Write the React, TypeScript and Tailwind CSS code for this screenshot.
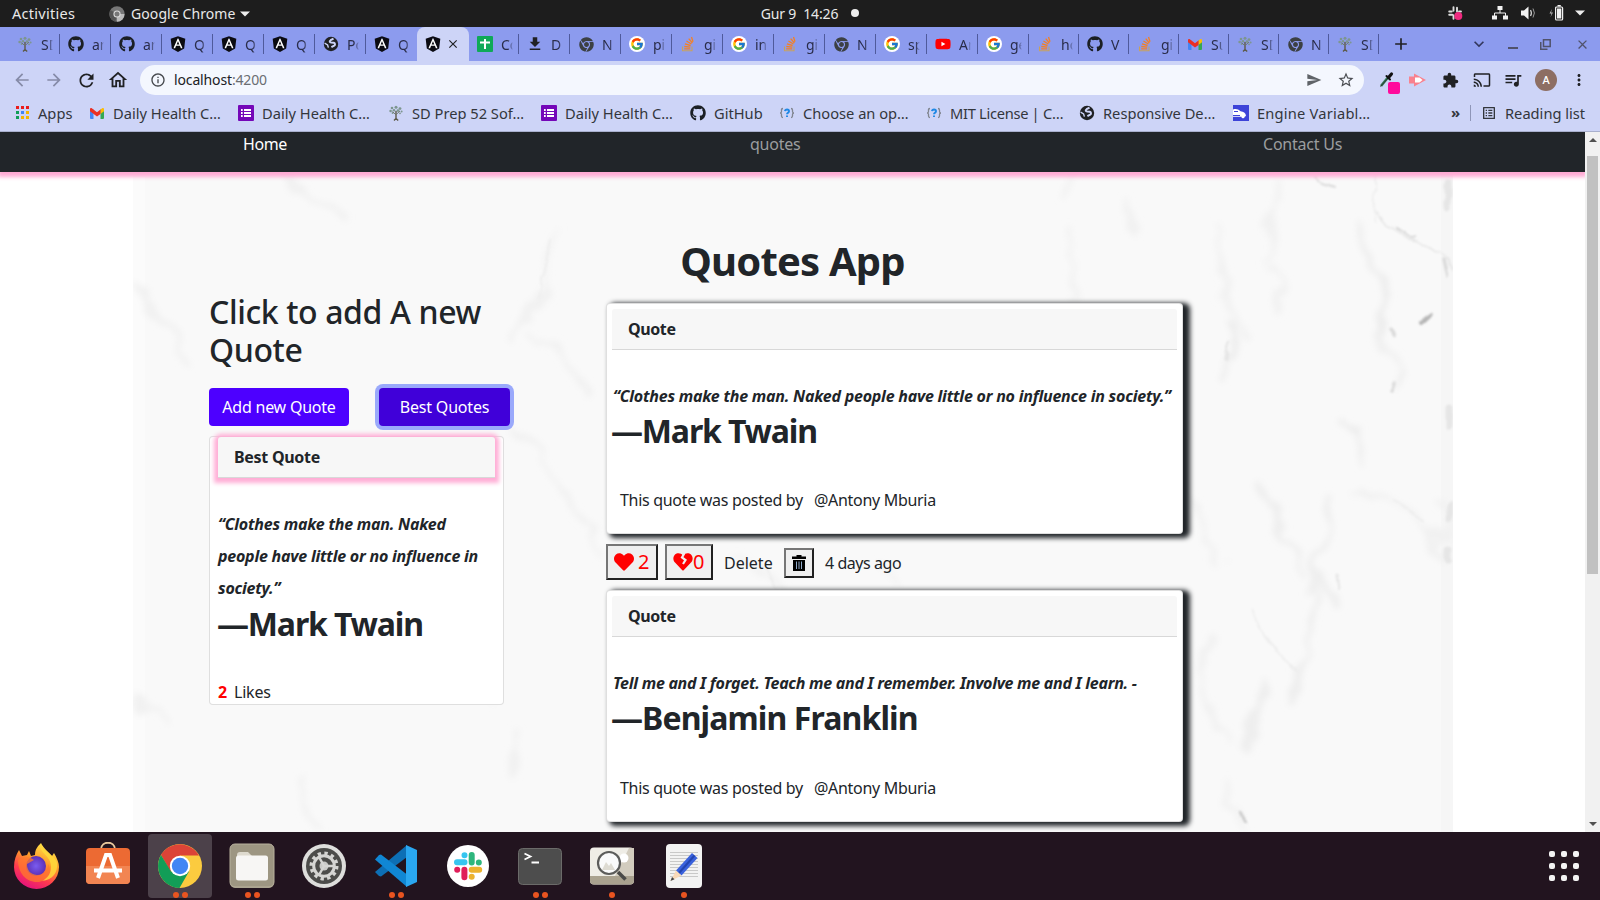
import type { ReactNode } from "react";
import { FaAngular, FaChrome, FaGithub, FaHeart, FaYoutube } from "react-icons/fa";
import { FcGoogle } from "react-icons/fc";
import {
  MdAdd, MdArrowBack, MdArrowForward, MdCast, MdClose, MdExtension, MdFileDownload, MdInfoOutline,
  MdKeyboardArrowDown, MdMoreVert, MdOutlineHome, MdOutlineListAlt, MdQueueMusic, MdRefresh, MdSend, MdStarBorder,
} from "react-icons/md";

/* ---------- small icons ---------- */

const Tree = () => (
  <svg width="16" height="16" viewBox="0 0 16 16">
    <g fill="#7d968f">
      <circle cx="4" cy="3" r="1.3" /><circle cx="8" cy="2.2" r="1.5" /><circle cx="12" cy="3.6" r="1.4" />
      <circle cx="2.6" cy="6" r="1.3" /><circle cx="6" cy="5.2" r="1.3" /><circle cx="10" cy="5.6" r="1.4" />
      <circle cx="13.6" cy="6.6" r="1" /><circle cx="4.6" cy="8" r="1" /><circle cx="12" cy="8.3" r=".9" />
    </g>
    <path d="M8 6v9M6 15.400l2-2 2.200 2" stroke="#5d5a49" strokeWidth="1.400" fill="none" />
    <path d="M8 10L4.500 6.500M8.200 9.500L12 6" stroke="#6d7568" strokeWidth=".9" fill="none" />
  </svg>
);
const Angular = () => (
  <span className="-m-px grid h-[18px] w-[18px] place-items-center">
    <span className="col-start-1 row-start-1 h-[10px] w-2 bg-white" />
    <FaAngular className="col-start-1 row-start-1 text-[18px] text-[#0b0b12]" />
  </span>
);
const Globe = () => (
  <svg width="16" height="16" viewBox="0 0 16 16">
    <circle cx="8" cy="8" r="7.2" fill="#202124" />
    <path d="M10.500 2.600L7.600 4.200c-1.400 1-1 2.200.6 2.400l2.600.2c1.400.4 1.600 2 .4 2.800L8.400 11.200" stroke="#cdd4f7" strokeWidth="2" fill="none" />
    <path d="M1.600 7.200l3 1.800.8 2.600" stroke="#cdd4f7" strokeWidth="1.400" fill="none" />
  </svg>
);
const Google = () => (
  <span className="grid h-4 w-4 place-items-center rounded-full bg-white"><FcGoogle className="text-[14px]" /></span>
);
const Sheets = () => (
  <svg width="16" height="16" viewBox="0 0 16 16">
    <rect width="16" height="16" rx="1" fill="#0fa958" />
    <path d="M8 3v10M3 6.500h10" stroke="#fff" strokeWidth="2" />
  </svg>
);
const Forms = () => (
  <svg width="16" height="16" viewBox="0 0 16 16">
    <rect width="16" height="16" rx="1" fill="#7407b8" />
    <path d="M6 5h7M6 8h7M6 11h7M3 5h1.700M3 8h1.700M3 11h1.700" stroke="#fff" strokeWidth="1.800" />
  </svg>
);
const Gmail = () => (
  <svg width="16" height="16" viewBox="0 0 16 16">
    <path d="M1 4.500h3.500V14H2a1 1 0 0 1-1-1z" fill="#4285f4" />
    <path d="M11.500 4.500H15V13a1 1 0 0 1-1 1h-2.500z" fill="#34a853" />
    <path d="M11.500 4.600l1.700-1.400c.9-.6 1.800 0 1.800 1v2L11.500 9z" fill="#fbbc04" />
    <path d="M1 4.200c0-1.100 1-1.600 1.800-1L8 7.200l3.500-2.600V9L8 11.600 1 6.300z" fill="#ea2f23" />
  </svg>
);
const Youtube = () => (
  <span className="grid h-4 w-4 place-items-center">
    <span className="col-start-1 row-start-1 h-1.5 w-1.5 bg-white" />
    <FaYoutube className="col-start-1 row-start-1 text-[16px] text-[#ff0000]" />
  </span>
);
const Overflow = () => (
  <svg width="16" height="16" viewBox="0 0 16 16" fill="none">
    <path d="M2.500 10.500v4.300h9.500v-4.300" stroke="#c9a25c" strokeWidth="1.100" />
    <path d="M4.200 12.800h6M4.300 10.500l6 .6M4.900 7.900l5.700 1.600M6.400 5l5 3M8.700 2.700l3.700 4.300M11.500 1l1.500 4.800" stroke="#f48024" strokeWidth="1.300" />
  </svg>
);
const Github = () => <FaGithub className="text-[16px] text-[#1b1f24]" />;
const Chrome = () => <FaChrome className="text-[15px] text-[#3c4043]" />;
const Download = () => <MdFileDownload className="-m-px text-[18px] text-[#202124]" />;
const Question = () => (
  <svg width="16" height="16" viewBox="0 0 16 16" fill="none">
    <path d="M4 3.500c-1.500 0-1.500.5-1.500 1.500v1.500C2.500 7.500 2 8 1 8c1 0 1.500.5 1.500 1.500V11c0 1 0 1.500 1.500 1.500M12 3.500c1.500 0 1.500.5 1.500 1.500v1.500c0 1 .5 1.500 1.500 1.500-1 0-1.500.5-1.500 1.500V11c0 1 0 1.500-1.500 1.500" stroke="#80858f" strokeWidth="1.300" />
    <path d="M6 6.200c.2-2.200 4-2.200 4 0 0 1.500-2 1.400-2 3M8 10.400v1.700" stroke="#1e88e5" strokeWidth="1.900" />
  </svg>
);
const Car = () => (
  <svg width="16" height="16" viewBox="0 0 16 16">
    <rect width="16" height="16" fill="#3d43d8" />
    <path d="M0 4.500c3-1 5-.5 7.500 1.800 3 .3 5 1.500 5.500 4.200l-1 1.200H0z" fill="#fff" />
    <circle cx="10" cy="11.700" r="1.600" fill="#fff" /><path d="M1 6.500h4" stroke="#3d43d8" />
    <path d="M0 10.500h7" stroke="#3d43d8" />
  </svg>
);
const AppsGrid = () => (
  <svg width="13" height="13" viewBox="0 0 13 13">
    <path d="M0 0h3v3H0zM5 0h3v3H5zM10 0h3v3h-3z" fill="#ea1c1c" />
    <path d="M0 5h3v3H0z" fill="#0f9d58" /><path d="M5 5h3v3H5z" fill="#4285f4" /><path d="M10 5h3v3h-3z" fill="#f4b400" />
    <path d="M0 10h3v3H0z" fill="#0f9d58" /><path d="M5 10h3v3H5zM10 10h3v3h-3z" fill="#f4b400" />
  </svg>
);

/* ---------- desktop top bar ---------- */

function TopBar() {
  return (
    <div className="grid h-[27px] shrink-0 grid-cols-3 items-center bg-[#1d1d1d] text-[14px] text-[#e9e9e9]">
      <div className="flex items-center pl-3">
        <span className="w-[97px] text-[14.5px] tracking-[0.020em]">Activities</span>
        <svg className="mr-1.5" width="16" height="16" viewBox="0 0 16 16">
          <circle cx="8" cy="8" r="7.700" fill="#777" />
          <path d="M8 8h7.500A7.700 7.700 0 0 1 8 15.700z" fill="#bbb" /><path d="M1.500 4L8 8l-1.500 7.500A7.700 7.700 0 0 1 1.500 4z" fill="#555" />
          <circle cx="8" cy="8" r="3.600" fill="#ddd" /><circle cx="8" cy="8" r="2.500" fill="#777" />
        </svg>
        <span className="w-[109px] tracking-[0.006em]">Google Chrome</span>
        <svg width="10" height="6" viewBox="0 0 10 6"><path d="M0 .5h10l-5 5z" fill="#eee" /></svg>
      </div>
      <div className="flex items-center justify-center whitespace-pre pb-px pl-[20px]">
        <span className="tracking-[-0.010em]">Gur 9  14:26</span>
        <span className="ml-[13px] h-2 w-2 rounded-full bg-[#eee]" />
      </div>
      <div className="flex items-center justify-end pb-px pr-[15px]">
        <svg className="mr-[29px]" width="15" height="15" viewBox="0 0 15 15">
          <path d="M5.500 1.200v3.500M1.200 5.500h2.500M9 1.800v3.700M1.200 8.800h3M5.500 9.200v3.500M11 5.500h2" stroke="#ddd" strokeWidth="1.900" strokeLinecap="round" />
          <circle cx="10.300" cy="10" r="4" fill="#ef2a7f" />
        </svg>
        <svg className="mr-[13px]" width="16" height="14" viewBox="0 0 16 14" fill="#f2f2f2">
          <path d="M5.500 0h5v4h-5zM0 9.500h5v4H0zM11 9.500h5v4h-5z" /><path d="M8 4v3M2.500 10V7h11v3" stroke="#f2f2f2" fill="none" />
        </svg>
        <svg className="mr-[12px]" width="16" height="14" viewBox="0 0 16 14" fill="none">
          <path d="M0 4.500h3L7.500.5v13L3 9.500H0z" fill="#f2f2f2" /><path d="M9.500 4q1.800 3 0 6" stroke="#ccc" strokeWidth="1.300" /><path d="M12 2.500q2.800 4.500 0 9" stroke="#999" />
        </svg>
        <svg className="mr-[11px]" width="15" height="16" viewBox="0 0 15 16" fill="none">
          <path d="M3 4L.5 8.500h2L1.500 12 4 7.500H2z" fill="#bbb" />
          <rect x="6.600" y="2" width="7" height="13" rx="1" stroke="#f2f2f2" strokeWidth="1.200" /><path d="M8 3.600h4.300v9.800H8zM8.500 0h3.300v1.500H8.500z" fill="#f2f2f2" />
        </svg>
        <svg width="10" height="6" viewBox="0 0 10 6"><path d="M0 .5h10l-5 5z" fill="#eee" /></svg>
      </div>
    </div>
  );
}

/* ---------- browser tabs ---------- */

type TabInfo = { icon: ReactNode; text: string; active?: boolean };

const tabs: TabInfo[] = [
  { icon: <Tree />, text: "SD" }, { icon: <Github />, text: "an" }, { icon: <Github />, text: "an" },
  { icon: <Angular />, text: "Q" }, { icon: <Angular />, text: "Q" }, { icon: <Angular />, text: "Q" },
  { icon: <Globe />, text: "Po" }, { icon: <Angular />, text: "Q" }, { icon: <Angular />, text: "", active: true },
  { icon: <Sheets />, text: "Co" }, { icon: <Download />, text: "D" }, { icon: <Chrome />, text: "N" },
  { icon: <Google />, text: "pi" }, { icon: <Overflow />, text: "gi" }, { icon: <Google />, text: "in" },
  { icon: <Overflow />, text: "gi" }, { icon: <Chrome />, text: "N" }, { icon: <Google />, text: "sp" },
  { icon: <Youtube />, text: "An" }, { icon: <Google />, text: "ge" }, { icon: <Overflow />, text: "ho" },
  { icon: <Github />, text: "V" }, { icon: <Overflow />, text: "gi" }, { icon: <Gmail />, text: "Su" },
  { icon: <Tree />, text: "SD" }, { icon: <Chrome />, text: "N" }, { icon: <Tree />, text: "SD" },
];

function Tab({ tab, narrow, line }: { tab: TabInfo; narrow: boolean; line: boolean }) {
  if (tab.active) {
    return (
      <div className="flex h-[34px] w-[52px] items-center rounded-t-lg bg-[#cdd4f7] pl-2">
        <span className="mr-[5px] flex w-4 justify-center">{tab.icon}</span>
        <MdClose className="text-[14px] text-[#202124]" />
      </div>
    );
  }
  return (
    <div className={narrow ? "flex h-[34px] w-[50px] items-center pl-2" : "flex h-[34px] w-[51px] items-center pl-2"}>
      <span className="mr-2 flex w-4 shrink-0 justify-center">{tab.icon}</span>
      <span className="w-[12px] overflow-hidden whitespace-nowrap text-[14px] text-[#2a2d4a] [mask-image:linear-gradient(to_right,black_65%,transparent)]">{tab.text}</span>
      <span className={line ? "ml-auto h-5 w-px bg-[#4f5a9c]" : "ml-auto h-5 w-px"} />
    </div>
  );
}

function TabStrip() {
  return (
    <div className="flex h-[34px] shrink-0 items-center bg-[#8c9bee] pl-[9px]">
      {tabs.map((t, i) => (
        <Tab key={i} tab={t} narrow={i > 19 || i === 9} line={i !== 7} />
      ))}
      <MdAdd className="ml-[12px] text-[20px] text-[#202124]" />
      <MdKeyboardArrowDown className="ml-[58px] text-[20px] text-[#33375c]" />
      <div className="ml-auto flex items-center pr-[10px] text-[#50526b]">
        <span className="mr-[22px] mt-2 h-0.5 w-[10px] bg-[#50526b]" />
        <svg className="mr-[24px]" width="11" height="11" viewBox="0 0 11 11" fill="none" stroke="#50526b" strokeWidth="1.500">
          <path d="M3.500.75h6.700V7.500H3.500zM.75 3v7.200H7.500" />
        </svg>
        <MdClose className="text-[15px]" />
      </div>
    </div>
  );
}

/* ---------- address bar ---------- */

function Toolbar() {
  return (
    <div className="flex h-[38px] shrink-0 items-center bg-[#cdd4f7] text-[#202124]">
      <MdArrowBack className="ml-3 text-[20px] text-[#868ba8]" />
      <MdArrowForward className="ml-3 text-[20px] text-[#868ba8]" />
      <MdRefresh className="ml-[12px] text-[21px]" />
      <MdOutlineHome className="ml-[10px] text-[22px]" />
      <div className="ml-[11px] flex h-[30px] w-[1224px] items-center rounded-full bg-[#f4f7fe] pl-[10px]">
        <MdInfoOutline className="mr-2 text-[16px] text-[#45484d]" />
        <span className="pb-px text-[14px] tracking-[-0.010em]">localhost<span className="text-[#6a6d72]">:4200</span></span>
        <MdSend className="ml-auto text-[16px] text-[#5f6368]" />
        <MdStarBorder className="ml-[15px] mr-[9px] text-[18px] text-[#4a4d52]" />
      </div>
      <div className="relative ml-3.5 h-5 w-[22px]">
        <svg width="20" height="20" viewBox="0 0 20 20" fill="none">
          <path d="M3 16L9.500 8" stroke="#2d7a52" strokeWidth="2.600" /><path d="M2.500 16.500L10 8" stroke="#333" />
          <path d="M8.500 6l3.500 3.500" stroke="#111" strokeWidth="2" strokeLinecap="round" /><path d="M10.500 7.500L13.500 4" stroke="#111" strokeWidth="3.200" strokeLinecap="round" />
        </svg>
        <span className="absolute bottom-[-4px] right-0 h-3 w-3 rounded-[2px] bg-[#ff0a9c]" />
      </div>
      <svg className="ml-[9px]" width="17" height="14" viewBox="0 0 17 14">
        <path d="M0 3.500h5V.5L17 7 5 13.500v-3H0z" fill="#f9828f" /><path d="M6 4.500h4.500l3 2.500-3 2.500H6z" fill="#fff" />
      </svg>
      <MdExtension className="ml-[16px] text-[17px]" />
      <MdCast className="ml-[14px] text-[18px]" />
      <MdQueueMusic className="ml-[12px] text-[20px]" />
      <span className="ml-[12px] grid h-[22px] w-[22px] place-items-center rounded-full bg-[#8d6e63] text-[11px] font-medium text-white">A</span>
      <MdMoreVert className="ml-[13px] text-[18px]" />
    </div>
  );
}

function Bookmark({ icon, text, box }: { icon: ReactNode; text: string; box: string }) {
  return (
    <div className={`flex items-center whitespace-nowrap ${box}`}>
      <span className="mr-[8px] flex w-4 shrink-0 justify-center">{icon}</span>
      {text}
    </div>
  );
}

function Bookmarks() {
  return (
    <div className="flex h-[33px] shrink-0 items-center border-b border-[#a9b0cd] bg-[#cdd4f7] pb-[5px] pl-[14px] text-[14.67px] text-[#33363c]">
      <Bookmark icon={<AppsGrid />} text="Apps" box="w-[75px]" />
      <Bookmark icon={<Gmail />} text="Daily Health C…" box="w-[149px]" />
      <Bookmark icon={<Forms />} text="Daily Health C…" box="w-[150px]" />
      <Bookmark icon={<Tree />} text="SD Prep 52 Sof…" box="w-[153px]" />
      <Bookmark icon={<Forms />} text="Daily Health C…" box="w-[149px]" />
      <Bookmark icon={<Github />} text="GitHub" box="w-[89px]" />
      <Bookmark icon={<Question />} text="Choose an op…" box="w-[147px]" />
      <Bookmark icon={<Question />} text="MIT License | C…" box="w-[153px] tracking-[-0.020em]" />
      <Bookmark icon={<Globe />} text="Responsive De…" box="w-[154px]" />
      <Bookmark icon={<Car />} text="Engine Variabl…" box="w-[218px] tracking-[0.014em]" />
      <span className="w-[19px] text-[15px] font-bold">»</span>
      <span className="mr-[10px] h-4 w-px bg-[#8f96b8]" />
      <Bookmark icon={<MdOutlineListAlt className="text-[18px]" />} text="Reading list" box="" />
    </div>
  );
}

/* ---------- page ---------- */

function Marble() {
  return (
    <svg className="absolute left-[133px] top-0" width="1320" height="660" viewBox="133 172 1320 660">
      <defs>
        <filter id="soft" filterUnits="userSpaceOnUse" x="133" y="172" width="1320" height="660">
          <feTurbulence type="fractalNoise" baseFrequency="0.022" numOctaves="3" seed="4" result="n" />
          <feDisplacementMap in="SourceGraphic" in2="n" scale="44" xChannelSelector="R" yChannelSelector="G" />
          <feGaussianBlur stdDeviation="3" />
        </filter>
        <filter id="fine" filterUnits="userSpaceOnUse" x="133" y="172" width="1320" height="660">
          <feTurbulence type="fractalNoise" baseFrequency="0.06" numOctaves="2" seed="8" result="n" />
          <feDisplacementMap in="SourceGraphic" in2="n" scale="9" xChannelSelector="R" yChannelSelector="G" />
          <feGaussianBlur stdDeviation="1" />
        </filter>
      </defs>
      <rect x="133" y="172" width="1320" height="660" fill="#f9f9f9" />
      <rect x="133" y="172" width="12" height="660" fill="#fbfbfb" />
      <rect x="1441" y="172" width="12" height="660" fill="#f6f6f6" />
      <g filter="url(#soft)" fill="none" stroke="#f1f1f1" strokeWidth="6" strokeLinecap="round">
        <path d="M133 290q25 30 45 60l18 20M285 172q20 25 50 42M555 240q-10 60-35 100M540 330l50 60M520 430l50 60 28 60" />
        <path d="M1085 172l-15 20M1060 235l12 35-4 30M1130 190l6 50M1195 500l25 60M1210 230q20 60 30 100" />
        <path d="M1280 172l5 30-25 50M1270 260l20 30-10 30" />
        <path d="M1355 220l22 70q14 50 24 90l-8 18M1230 320l-6 40 5 18M1345 420l18 0-5 50" stroke="#ececec" strokeWidth="6" />
        <path d="M1255 475l30 60 25 30M1330 500l-10 80-16 60-15 60M1305 590l20-20 10 40M1270 690l-20 60" stroke="#eeeeee" strokeWidth="7" />
        <path d="M1210 630l-10 60 30 60M1360 490l60 40 30 22M1440 500l10 60M1225 780l20 60M300 780l15 50M520 740l-10 40M133 700l30 30M480 640l20 60" />
        <path d="M730 560l60 28M880 565l20 20M1385 330l15 40" />
      </g>
      <g filter="url(#fine)" fill="none" strokeLinecap="round">
        <path d="M1314 177l10 6 10 4" stroke="#d9d9d9" strokeWidth="2" />
        <path d="M1377 213l12 14 34 18 20 10 10 14" stroke="#e4e4e4" strokeWidth="1.500" />
        <path d="M1399 229l16 8" stroke="#d4d4d4" strokeWidth="2.200" />
        <path d="M1421 323l10-9" stroke="#b4b4b4" strokeWidth="4" />
        <path d="M1444 262l4 14M1390 330l5 6M1393 392l2-8" stroke="#dadada" strokeWidth="3.500" />
        <path d="M1338 575l2 14M1228 342l-3 18" stroke="#e6e6e6" strokeWidth="3" />
        <path d="M1240 813l5 9" stroke="#c9c9c9" strokeWidth="2.500" />
        <path d="M1252 608l14 32 30 30M1375 220l-1-48M550 240l-12 60M760 560l18 30M1394 500l30 22" stroke="#ededed" strokeWidth="1.800" />
        <path d="M1448 182v24M1449 410v16M1449 505v12M1448 550v10" stroke="#e6e6e6" strokeWidth="7" />
      </g>
    </svg>
  );
}

type Quote = { text: string; author: string; textClass: string; authorClass: string; postedClass: string; box: string };

function QuoteCard({ q }: { q: Quote }) {
  return (
    <article className={`w-[577px] rounded border border-black/[.125] bg-white px-[5px] pt-[5px] shadow-[5px_2px_5px_2px_#212529] ${q.box}`}>
      <div className="h-[41px] rounded-t-[3px] border-b border-black/[.125] bg-[#f7f7f7] px-4 py-2 font-bold leading-6 tracking-[-0.025em]">Quote</div>
      <p className={`mt-[30px] whitespace-nowrap pl-px font-bold italic leading-8 ${q.textClass}`}>{q.text}</p>
      <h2 className={`ml-[-1px] whitespace-nowrap text-[32px] font-bold leading-[38.4px] ${q.authorClass}`}>{q.author}</h2>
      <p className={`flex pl-2 leading-6 ${q.postedClass}`}>
        <span className="w-[194px] tracking-[-0.019em]">This quote was posted by</span>
        <span className="tracking-[-0.019em]">@Antony Mburia</span>
      </p>
    </article>
  );
}

const bevel = "flex items-center border-2 border-b-[#212121] border-l-[#767676] border-r-[#212121] border-t-[#767676] bg-[#efefef]";

function Actions() {
  return (
    <div className="my-2.5 flex h-[36px] items-center leading-6">
      <button className={`${bevel} h-9 w-[52px] pl-1.5 text-[20px] text-[#ff0000]`}>
        <FaHeart className="mr-[4px] text-[20px]" />2
      </button>
      <button className={`${bevel} ml-[7px] h-9 w-[48px] pl-1.5 text-[20px] text-[#ff0000]`}>
        <svg className="shrink-0" width="20" height="20" viewBox="0 0 20 20">
          <path d="M10 3.600C8 .7 4 .6 2 2.600c-2.300 2.300-2.100 5.900 0 8l7.300 7.600c.4.4 1 .4 1.400 0l7.300-7.600c2.100-2.100 2.300-5.700 0-8-2-2-6-1.900-8 1z" fill="red" />
          <path d="M11.500 1L9 5.500 12.500 8 10 12" stroke="#efefef" strokeWidth="2.200" fill="none" />
        </svg>
        <span className="tracking-[-0.05em]">0</span>
      </button>
      <span className="ml-[11px] w-[60px] pt-px">Delete</span>
      <button className={`${bevel} mt-px h-[30px] w-[30px] justify-center`}>
        <svg width="14" height="16" viewBox="0 0 14 16">
          <path d="M4.500 0h5v1.500H14V4H0V1.500h4.500zM1 5h12v11H1z" />
          <path d="M4.500 6.500v7.500M7 6.500v7.500M9.500 6.500v7.500" stroke="#8fa9c9" />
        </svg>
      </button>
      <span className="ml-[11px] pt-px tracking-[-0.028em]">4 days ago</span>
    </div>
  );
}

function Sidebar() {
  return (
    <div className="w-[397px] pt-[9px]">
      <h2 className="mt-[-19px] whitespace-nowrap text-[32px] font-medium leading-[38.4px] tracking-[-0.012em]">Click to add A new<br />Quote</h2>
      <div className="mt-[18px] flex text-white">
        <button className="h-[38px] w-[140px] whitespace-nowrap rounded bg-[#4d00ff] tracking-[-0.014em]">Add new Quote</button>
        <button className="ml-[30px] h-[38px] w-[131px] whitespace-nowrap rounded bg-[#4000d9] tracking-[-0.012em] shadow-[0_0_0_4px_#9aa9fb]">Best Quotes</button>
      </div>
      <article className="mt-[10px] h-[269px] w-[295px] rounded border border-black/[.125] bg-white px-2">
        <div className="h-[41px] rounded-t-[3px] border-b border-black/[.125] bg-[#f7f7f7] px-4 py-2 font-bold leading-6 tracking-[-0.018em] shadow-[0_1px_4px_4px_#ffaed6]">Best Quote</div>
        <p className="mt-[30px] whitespace-nowrap font-bold italic leading-8 tracking-[-0.014em]">
          “Clothes make the man. Naked<br />people have little or no influence in<br />society.”
        </p>
        <h2 className="ml-[-1px] mt-px whitespace-nowrap text-[32px] font-bold leading-[38.4px] tracking-[-0.036em]">—Mark Twain</h2>
        <p className="mt-[37px] flex leading-6"><b className="w-4 text-[#ff0000]">2</b><span className="tracking-[-0.014em]">Likes</span></p>
      </article>
    </div>
  );
}

const quotes: Quote[] = [
  { text: "“Clothes make the man. Naked people have little or no influence in society.”", author: "—Mark Twain", textClass: "tracking-[-0.014em]", authorClass: "tracking-[-0.036em]", postedClass: "mt-[38px]", box: "h-[231px]" },
  { text: "Tell me and I forget. Teach me and I remember. Involve me and I learn. -", author: "—Benjamin Franklin", textClass: "tracking-[-0.017em]", authorClass: "tracking-[-0.028em]", postedClass: "mt-[39px]", box: "h-[232px]" },
];

function Page() {
  return (
    <div className="flex h-[700px] shrink-0 bg-white text-[16px] text-[#212529]">
      <div className="flex w-[1585px] flex-col overflow-hidden">
        <nav className="relative z-10 flex h-10 shrink-0 bg-[#212529] leading-6 text-[#9b9d9f] shadow-[0_3px_4px_2px_#ffaad4]">
          <span className="w-[507px] pl-[243px] tracking-[-0.024em] text-white">Home</span>
          <span className="w-[513px] pl-[243px] tracking-[-0.014em]">quotes</span>
          <span className="pl-[243px] tracking-[-0.014em]">Contact Us</span>
        </nav>
        <main className="relative h-[660px] overflow-hidden">
          <Marble />
          <div className="relative pt-[65px]">
            <h1 className="text-center text-[40px] font-bold leading-[48px] tracking-[-0.020em]">Quotes App</h1>
            <div className="flex pl-[209px] pt-[18px]">
              <Sidebar />
              <section>
                <QuoteCard q={quotes[0]} />
                <Actions />
                <QuoteCard q={quotes[1]} />
              </section>
            </div>
          </div>
        </main>
      </div>
      <div className="flex w-[15px] flex-col items-center bg-[#f1f1f1] py-[6px]">
        <svg width="8" height="4" viewBox="0 0 8 4"><path d="M0 4h8L4 0z" fill="#505050" /></svg>
        <div className="mt-[14px] h-[418px] w-[11px] bg-[#c1c1c1]" />
        <svg className="mt-auto" width="8" height="4" viewBox="0 0 8 4"><path d="M0 0h8L4 4z" fill="#505050" /></svg>
      </div>
    </div>
  );
}

/* ---------- dock ---------- */

const Firefox = () => (
  <svg width="48" height="48" viewBox="0 0 48 48">
    <defs>
      <linearGradient id="ff" x1=".8" y1="0" x2=".3" y2="1"><stop offset="0" stopColor="#fff44f" /><stop offset=".4" stopColor="#ff9a2a" /><stop offset=".7" stopColor="#ff3b4e" /><stop offset="1" stopColor="#e3107f" /></linearGradient>
      <radialGradient id="fp"><stop offset="0" stopColor="#7a5cf0" /><stop offset="1" stopColor="#5b2fb5" /></radialGradient>
    </defs>
    <path d="M7 8l3 6 5-1 2-4 2 5 4-1c0-6 3-9 6-12 2 5 8 9 11 13l2-3c3 5 5 10 5 14a22.500 22 0 0 1-45 0C2 18 4 13 7 8z" fill="url(#ff)" />
    <circle cx="24" cy="24" r="10" fill="url(#fp)" />
    <path d="M6 18c6-4 12-3 16 0l-7 4c0 6 3 10 10 11 7 0 11-5 11-11 6 10-3 18-11 18C14 40 6 31 6 18z" fill="#ff7a2e" opacity=".75" />
    <path d="M28 3c0 9 11 10 11 22 0 8-5 12-9 14 11-1 16-9 15-18-2-8-12-10-17-18z" fill="#ffd93b" opacity=".85" />
  </svg>
);
const Software = () => (
  <svg width="48" height="48" viewBox="0 0 48 48">
    <path d="M17 7.500c0-9 14-9 14 0" stroke="#e8c79c" strokeWidth="2" fill="none" />
    <rect x="2" y="6" width="44" height="36" rx="4" fill="#ec6a33" /><path d="M2 24h44v14a4 4 0 0 1-4 4H6a4 4 0 0 1-4-4z" fill="#f28552" />
    <path d="M14 36l8-23h4l8 23M10 28.500h28" stroke="#fff" strokeWidth="4" fill="none" />
  </svg>
);
const ChromeColor = () => (
  <svg width="46" height="46" viewBox="0 0 46 46">
    <circle cx="23" cy="23" r="22" fill="#fbcb3f" />
    <path d="M4 12A22 22 0 0 1 42 12.500H23L13.500 28.500z" fill="#dc4437" />
    <path d="M4 12a22 22 0 0 0 18.500 33L32 28.500H14z" fill="#129d57" />
    <circle cx="23" cy="23" r="10.200" fill="#fff" /><circle cx="23" cy="23" r="8.200" fill="#4285f4" />
  </svg>
);
const Files = () => (
  <svg width="46" height="46" viewBox="0 0 46 46">
    <rect x="1" y="1" width="44" height="44" rx="5" fill="#9d9682" /><rect x="1" y="1" width="44" height="43" rx="5" fill="none" stroke="#b8b19d" />
    <path d="M8 12a3 3 0 0 1 3-3h8l4 4h9v8H8z" fill="#dedace" /><rect x="7" y="12.500" width="32" height="25" rx="2.500" fill="#f7f6f4" />
  </svg>
);
const Settings = () => (
  <svg width="46" height="46" viewBox="0 0 46 46" fill="none">
    <circle cx="23" cy="23" r="22" fill="#dededc" /><circle cx="23" cy="23" r="18" fill="#4c4c4a" />
    <circle cx="23" cy="23" r="12.800" stroke="#d5d5d3" strokeWidth="3.400" strokeDasharray="3.350 3.350" />
    <circle cx="23" cy="23" r="10.300" stroke="#d5d5d3" strokeWidth="3" /><circle cx="23" cy="23" r="4.500" fill="#c9c9c7" />
    <path d="M23 23h10M23 23l-5-9M23 23l-5 9" stroke="#d5d5d3" strokeWidth="2.500" />
  </svg>
);
const Code = () => (
  <svg width="44" height="44" viewBox="0 0 44 44">
    <path d="M1 28l4 4 2 .5L33 13V1L1 28z" fill="#0d6fb5" />
    <path d="M1 15.500l4-4.500 2-.5 26 20V43L1 15.500z" fill="#1087d4" />
    <path d="M32 1l11 5v32l-11 5z" fill="#2aa7f0" />
  </svg>
);
const Slack = () => (
  <svg width="42" height="42" viewBox="0 0 42 42">
    <circle cx="21" cy="21" r="21" fill="#fff" />
    <g strokeWidth="6" strokeLinecap="round">
      <path d="M10 17.300h7.500M17.500 10.200h.01" stroke="#36c5f0" /><path d="M24.700 10v7.500M31.800 17.500h.01" stroke="#2eb67d" />
      <path d="M24.700 24.700h7.500M24.700 31.800h.01" stroke="#ecb22e" /><path d="M17.400 24.700v7.500M10.200 24.700h.01" stroke="#e01e5a" />
    </g>
  </svg>
);
const Terminal = () => (
  <svg width="46" height="46" viewBox="0 0 46 46" fill="none">
    <rect x="1.500" y="5.500" width="43" height="36" rx="4" fill="#4d4d4d" stroke="#6b6b69" />
    <path d="M7.500 10.500l6 3-6 3M14.500 19.500h7.500" stroke="#fff" strokeWidth="1.800" />
  </svg>
);
const Viewer = () => (
  <svg width="46" height="46" viewBox="0 0 46 46" fill="none">
    <rect x="1" y="4.500" width="44" height="37" rx="4" fill="#efede6" /><path d="M26 33L40 5h5v28z" fill="#d2ccbe" />
    <path d="M1 33h44v4.500a4 4 0 0 1-4 4H5a4 4 0 0 1-4-4z" fill="#aaa28f" /><circle cx="35" cy="15" r="4.500" fill="#fff" />
    <circle cx="20" cy="20" r="11" fill="#fafafa" stroke="#5c5c5a" strokeWidth="2.200" /><path d="M13 27l4-8 3 4 2-3 4 7z" fill="#dedbd2" />
    <path d="M29 29l7.500 7.500" stroke="#4a4a48" strokeWidth="3.500" />
  </svg>
);
const Editor = () => (
  <svg width="46" height="46" viewBox="0 0 46 46" fill="none">
    <rect x="5" y="1" width="36" height="44" rx="4" fill="#f3f3f2" />
    <path d="M9 9.500h28M9 12.500h28M9 15.500h28M9 18.500h28M9 21.500h28M9 24.500h28M9 27.500h28M9 30.500h28M9 33.500h28" stroke="#c9c9c8" />
    <path d="M31 10l5.500 5L20.500 32.500l-5.500-5z" fill="#3a62dc" /><path d="M33.500 12.500L18 30" stroke="#2345b0" strokeWidth="2" />
    <path d="M15 27.500l5.500 5L9.500 38z" fill="#f9d9b8" /><path d="M9.500 38l1.500-4 2.500 2.200z" fill="#444" />
  </svg>
);

const dock: { icon: ReactNode; dots: number; active?: boolean }[] = [
  { icon: <Firefox />, dots: 0 }, { icon: <Software />, dots: 0 }, { icon: <ChromeColor />, dots: 2, active: true },
  { icon: <Files />, dots: 2 }, { icon: <Settings />, dots: 0 }, { icon: <Code />, dots: 2 }, { icon: <Slack />, dots: 0 },
  { icon: <Terminal />, dots: 2 }, { icon: <Viewer />, dots: 1 }, { icon: <Editor />, dots: 1 },
];

function Dock() {
  return (
    <div className="flex h-[68px] shrink-0 items-center gap-2 bg-[#22141f] pl-1 pr-[21px]">
      {dock.map((d, i) => (
        <div key={i} className={d.active ? "relative grid h-16 w-16 place-items-center rounded bg-[#4c414a] pb-px" : "relative grid h-16 w-16 place-items-center pb-px"}>
          {d.icon}
          <div className="absolute inset-x-0 bottom-0 flex justify-center gap-[3px]">
            {Array.from({ length: d.dots }, (_, k) => <span key={k} className="h-1.5 w-1.5 rounded-full bg-[#e95420]" />)}
          </div>
        </div>
      ))}
      <div className="ml-auto grid grid-cols-3 gap-1.5">
        {Array.from({ length: 9 }, (_, k) => <span key={k} className="h-1.5 w-1.5 rounded-[2px] bg-[#f3f2f3]" />)}
      </div>
    </div>
  );
}

export default function App() {
  return (
    <div className="flex h-[900px] w-[1600px] flex-col overflow-hidden font-['Noto_Sans','Open_Sans',sans-serif]">
      <TopBar />
      <TabStrip />
      <Toolbar />
      <Bookmarks />
      <Page />
      <Dock />
    </div>
  );
}
